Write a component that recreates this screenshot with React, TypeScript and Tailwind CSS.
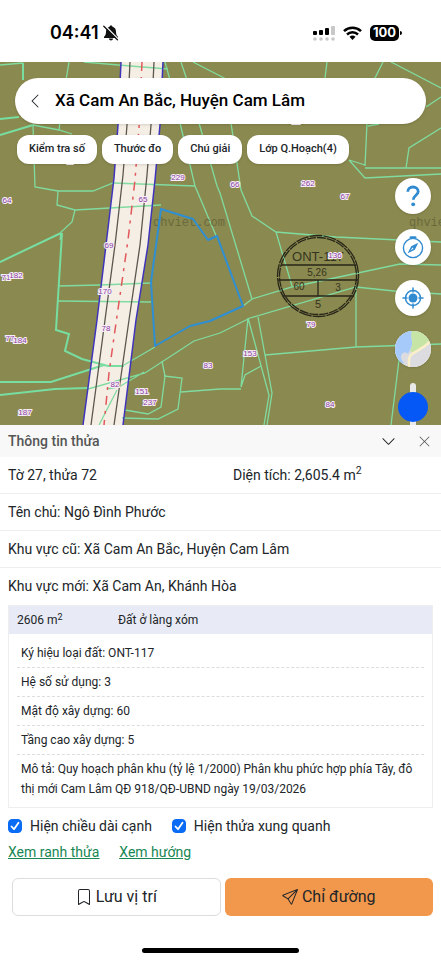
import type { ReactNode } from "react";
import { BsBookmark, BsChevronDown, BsChevronLeft, BsSend, BsXLg } from "react-icons/bs";

const filters = ["Kiểm tra số", "Thước đo", "Chú giải", "Lớp Q.Hoạch(4)"];

const details = [
  "Ký hiệu loại đất: ONT-117",
  "Hệ số sử dụng: 3",
  "Mật độ xây dựng: 60",
  "Tầng cao xây dựng: 5",
  "Mô tả: Quy hoạch phân khu (tỷ lệ 1/2000) Phân khu phức hợp phía Tây, đô thị mới Cam Lâm QĐ 918/QĐ-UBND ngày 19/03/2026",
];

// plot number labels: text, x, y
const plots: [string, number, number][] = [
  ["229", 178, 180],
  ["64", 7, 203],
  ["65", 143, 202],
  ["66", 235, 187],
  ["262", 308, 186],
  ["67", 345, 199],
  ["69", 109, 248],
  ["71", 6, 280],
  ["182", 16, 278],
  ["170", 105, 294],
  ["78", 106, 331],
  ["77", 10, 341],
  ["184", 20, 343],
  ["83", 208, 368],
  ["82", 115, 387],
  ["151", 142, 394],
  ["237", 150, 405],
  ["187", 25, 415],
  ["153", 250, 356],
  ["79", 311, 327],
  ["84", 330, 407],
  ["136", 335, 258],
];

function StatusBar() {
  return (
    <header className="flex h-[62px] items-center justify-between pl-[50px] pr-[39px] pt-1">
      <div className="flex items-center gap-1">
        <span className="font-['Inter'] text-[18px] font-semibold leading-6 text-black">04:41</span>
        <svg viewBox="0 0 16 16" className="size-4" aria-hidden="true">
          <path
            d="M8 .5c.8 0 1.400.5 1.500 1.200 2.300.7 3.500 2.500 3.500 5 0 2.900.8 3.900 2 5v1.300H1v-1.300c1.200-1.100 2-2.100 2-5 0-2.500 1.200-4.300 3.500-5C6.600 1 7.200.5 8 .5zM5.800 13.600h4.400c-.3 1.200-1.100 1.900-2.200 1.900s-1.900-.7-2.200-1.900z"
            fill="#111"
          />
          <path d="M2 .8l13 13.200" stroke="#fff" strokeWidth="1.600" />
          <path d="M.8 1.200l13.600 13.600" stroke="#111" strokeWidth="1.300" strokeLinecap="round" />
        </svg>
      </div>
      <div className="flex items-center gap-2">
        <svg viewBox="0 0 22 15" className="h-[15px] w-[22px]" aria-hidden="true">
          <rect x="0" y="5" width="4" height="4" rx="1" />
          <rect x="6" y="4" width="4" height="5" rx="1" />
          <rect x="12" y="2" width="4" height="7" rx="1" />
          <rect x="18" y="0" width="4" height="9" rx="1" fill="#c8c8c8" />
          {[2, 8, 14, 20].map((x) => (
            <circle key={x} cx={x} cy="13" r="1.800" fill="#c8c8c8" />
          ))}
        </svg>
        <svg viewBox="0 0 19 14" className="h-[14px] w-[19px]" aria-hidden="true">
          <g fill="none" stroke="#000" strokeWidth="2.500">
            <path d="M1 5.200a12.300 12.300 0 0 1 17 0" />
            <path d="M4 8.500a8 8 0 0 1 11 0" />
          </g>
          <path d="M6.500 10.800a4.400 4.400 0 0 1 6 0L9.500 14z" />
        </svg>
        <div className="flex items-center gap-px">
          <span className="flex h-4 w-[29px] items-center justify-center rounded-[5px] bg-black font-['Inter'] text-[13px] font-bold text-white">
            100
          </span>
          <span className="h-1 w-[2px] rounded-r bg-black" />
        </div>
      </div>
    </header>
  );
}

function ParcelMap() {
  return (
    <svg
      viewBox="0 62 441 363"
      preserveAspectRatio="xMidYMin slice"
      className="absolute inset-0 size-full"
      role="img"
      aria-label="Xã Cam An Bắc"
    >
      <rect y="62" width="441" height="363" fill="#8a894f" />
      <path
        d="M121 62L118 125L114 178L106 245L97 320L83 425H123L136 320L148 245L155 180L160 125L163 62Z"
        fill="#f4eee5"
      />
      <g fill="none" stroke="#80dba0" strokeWidth="1.300">
        <path d="M0 65L23 63M69 62L66 80M84 62L130 66L168 69M165 62L170 80M181 62L187 80M193 62L228 80M327 62L325 78M383 62L374 80M391 62L441 88M441 97L426 107" />
        <path d="M33 125L59 130L72 134M59 130L61 115M33 125L35 187L58 191L93 191L113 183L195 186M58 191L57 205L75 210L110 208L161 205M75 210L72 222L61 232L60 240" />
        <path d="M180 123L195 186L217 238M199 123L217 186L220 193L252 299M231 123L241 190L252 216L276 232L336 237L441 242M276 232L292 286" />
        <path d="M367 123L365 166M365 168H441M349 160L365 165M349 160L365 178L441 174M406 168L409 148L441 128M368 126L379 124" />
        <path d="M58 286L100 285L151 283M57 301L151 302M124 365L155 347M88 389L145 373L194 341L220 333M107 389L119 387L144 372" />
        <path d="M162 361L165 376L161 407L148 414L125 410M164 376L182 378L178 409L158 419L122 418M181 392L220 389M117 390L99 425" />
        <path d="M243 306L252 299L292 287L400 264L441 265M220 333L250 318L356 287L394 291L441 294M356 287L356 347M265 355L356 347L441 344M248 318L241 387L245 375L261 366M248 318L269 395L264 425M258 317L272 393L267 425M220 389H241M399 360L391 425" />
      </g>
      <path
        d="M0 119L19 117M0 135L33 125M23 63V80M0 262L61 233M62 233L56 330L69 334L65 351L82 359L108 366H124M0 382H51L104 365M0 395L55 389L88 388"
        fill="none"
        stroke="#78dda1"
        strokeWidth="2"
      />
      <g fill="none">
        <path
          d="M121 62L118 125L114 178L106 245L97 320L83 425M163 62L160 125L155 180L148 245L136 320L123 425"
          stroke="#3f35bc"
          strokeWidth="1.500"
        />
        <path
          d="M130 62L127 125L123 175L115 245L105 320L91 425M154 62L151 125L147 175L140 245L129 320L114 425"
          stroke="#5b574e"
          strokeWidth="1.300"
        />
        <path
          d="M142 62L139 128L135 180L128 240L115 330L109 373L104 425"
          stroke="#e2585b"
          strokeWidth="1.500"
          strokeDasharray="9 6 3 6"
        />
      </g>
      <g fontFamily="Liberation Mono, monospace" fontSize="12" fill="#6b6a3d">
        <text x="153" y="226">qhviet.com</text>
        <text x="409" y="226">qhviet.com</text>
      </g>
      <path
        d="M161 209L193 219L208 240L217 236L243 306L210 321L190 326L155 346L151 282Z"
        fill="none"
        stroke="#2f8fd3"
        strokeWidth="2"
        strokeLinejoin="round"
      />
      <g fill="none" stroke="#28271a" strokeWidth="1.300">
        <circle cx="318" cy="276" r="40.500" strokeDasharray="13 1" />
        <circle cx="318" cy="276" r="38.500" strokeDasharray="9 1" />
        <path d="M281 265H356M278 280H358M283 296H354M318 280V296" />
      </g>
      <g fontFamily="Liberation Sans, sans-serif" fill="#353420" textAnchor="middle">
        <text x="318" y="261" fontSize="13">ONT-117</text>
        <text x="317" y="276" fontSize="10">5,26</text>
        <text x="299" y="290" fontSize="10">60</text>
        <text x="338" y="291" fontSize="10">3</text>
        <text x="318" y="308" fontSize="11">5</text>
      </g>
      <g
        fontFamily="Liberation Sans, sans-serif"
        fontSize="8"
        fill="#8a3da0"
        stroke="#f7eef7"
        strokeWidth="2"
        paintOrder="stroke"
        textAnchor="middle"
      >
        {plots.map(([name, x, y]) => (
          <text key={name} x={x} y={y}>
            {name}
          </text>
        ))}
      </g>
      <g fill="#f7eef7">
        <rect x="291" y="120" width="10" height="5" rx="1" />
        <rect x="66" y="160" width="8" height="5" rx="1" />
      </g>
    </svg>
  );
}

function MapButton({ label, children }: { label: string; children: ReactNode }) {
  return (
    <button
      aria-label={label}
      className="flex size-9 items-center justify-center overflow-hidden rounded-full bg-white text-[#318bd0] shadow-sm"
    >
      {children}
    </button>
  );
}

function MapControls() {
  return (
    <div className="absolute right-[10px] top-[116px] flex flex-col items-center gap-[15px]">
      <MapButton label="Trợ giúp">
        <svg viewBox="0 0 24 24" className="size-6" fill="none" stroke="currentColor" strokeWidth="2.800">
          <path d="M6.800 7.800c0-3 2.200-4.800 5.200-4.800s5.200 1.700 5.200 4.600c0 3.600-4.900 3.800-4.900 8.200" />
          <circle cx="12.200" cy="20.300" r="1.900" fill="currentColor" stroke="none" />
        </svg>
      </MapButton>
      <MapButton label="La bàn">
        <svg viewBox="0 0 24 24" className="size-6" fill="none" stroke="currentColor" strokeWidth="1.400">
          <circle cx="12" cy="13" r="9.600" />
          <path d="M9.800 2.400h4.400" strokeWidth="2.400" strokeLinecap="round" />
          <path d="M17.300 7.700l-3.500 7.100-7.100 3.500 3.500-7.100z" fill="currentColor" stroke="none" />
          <path d="M11.500 12.500l1 1-3 2z" fill="#fff" stroke="none" />
        </svg>
      </MapButton>
      <MapButton label="Vị trí của tôi">
        <svg viewBox="0 0 24 24" className="size-6" fill="none" stroke="currentColor" strokeWidth="1.500">
          <circle cx="12" cy="12" r="7.500" />
          <circle cx="12" cy="12" r="4.500" fill="currentColor" stroke="none" />
          <path d="M12 2v4M12 18v4M2 12h4M18 12h4" strokeLinecap="round" />
        </svg>
      </MapButton>
      <MapButton label="Lớp bản đồ">
        <svg viewBox="0 0 36 36" className="size-9">
          <rect width="36" height="36" fill="#dcdce0" />
          <path d="M0 0h17c-2 6 1 10 0 14-1 4-3 6-4 9-3-3-7-1-7 3 0 3 2 4 3 6L0 36z" fill="#a6cbfa" />
          <path d="M17 0h19v11L20 22c-2-1-4-1-5-2 1-2 2-4 2-7 1-5-2-7 0-13z" fill="#c7e4a7" />
          <path d="M14 36c0-6-1-10 3-13 6-4 12-6 19-13" fill="none" stroke="#fbefca" strokeWidth="2.500" />
        </svg>
      </MapButton>
    </div>
  );
}

function InfoRow({ children }: { children: ReactNode }) {
  return <div className="flex h-[37px] items-center border-b border-[#eeeeee] px-2">{children}</div>;
}

function Check({ children }: { children: ReactNode }) {
  return (
    <label className="flex items-center gap-2">
      <span className="relative size-[14px]">
        <input
          type="checkbox"
          defaultChecked
          className="peer block size-[14px] appearance-none rounded-[4px] border border-[#bbbbbb] checked:border-[#0a6cf5] checked:bg-[#0a6cf5]"
        />
        <svg
          viewBox="0 0 14 14"
          className="pointer-events-none absolute inset-0 hidden peer-checked:block"
          fill="none"
          stroke="#fff"
          strokeWidth="1.800"
          strokeLinecap="round"
          strokeLinejoin="round"
          aria-hidden="true"
        >
          <path d="M3.500 7.500L6 10.200L10.500 3.800" />
        </svg>
      </span>
      {children}
    </label>
  );
}

export default function App() {
  return (
    <div className="min-h-screen bg-white font-['Roboto',sans-serif] text-[#212529]">
      <StatusBar />

      <section className="relative h-[363px] overflow-hidden">
        <ParcelMap />
        <div className="relative px-[15px] pt-4">
          <div className="flex h-[46px] items-center gap-3 rounded-full bg-white px-3 shadow-sm">
            <button aria-label="Quay lại">
              <BsChevronLeft className="size-4" />
            </button>
            <h1 className="text-[17px] font-medium text-black">Xã Cam An Bắc, Huyện Cam Lâm</h1>
          </div>
          <div className="flex gap-[5px] px-[2px] pt-[11px]">
            {filters.map((name) => (
              <button key={name} className="h-[29px] rounded-xl bg-white px-3 text-[11px] font-medium shadow-sm">
                {name}
              </button>
            ))}
          </div>
        </div>
        <MapControls />
        <div className="absolute right-[13px] top-[321px] flex w-[30px] justify-center">
          <span className="h-12 w-[6px] rounded-full bg-[#e9e9e9]" />
          <span className="absolute top-[9px] size-[30px] rounded-full bg-[#0558f5]" />
        </div>
      </section>

      <main>
        <div className="flex h-8 items-center justify-between bg-[#f8f8f8] pl-2 pr-[10px] text-[#555555]">
          <h2 className="text-[14px] font-medium">Thông tin thửa</h2>
          <div className="flex items-center gap-[22px]">
            <button aria-label="Thu gọn">
              <BsChevronDown className="size-[15px] text-[#222222]" />
            </button>
            <button aria-label="Đóng">
              <BsXLg className="size-[13px]" />
            </button>
          </div>
        </div>
        <div className="text-[14px]">
          <InfoRow>
            <span className="flex-1">Tờ 27, thửa 72</span>
            <span className="w-[200px]">
              Diện tích: 2,605.4 m<sup>2</sup>
            </span>
          </InfoRow>
          <InfoRow>Tên chủ: Ngô Đình Phước</InfoRow>
          <InfoRow>Khu vực cũ: Xã Cam An Bắc, Huyện Cam Lâm</InfoRow>
          <div className="flex h-[37px] items-center px-2">Khu vực mới: Xã Cam An, Khánh Hòa</div>
        </div>

        <section className="mx-2 border border-[#eeeeee] text-[12px]">
          <div className="flex h-7 items-center bg-[#e8ebf5] px-2">
            <span className="w-[101px]">
              2606 m<sup>2</sup>
            </span>
            <span>Đất ở làng xóm</span>
          </div>
          <ul className="px-2 pt-[5px]">
            {details.map((line) => (
              <li
                key={line}
                className="border-b border-dashed border-[#dddddd] px-1 py-1 leading-5 last:border-b-0 last:pb-2"
              >
                {line}
              </li>
            ))}
          </ul>
        </section>

        <div className="flex gap-5 px-2 pt-[7px] text-[14px] leading-[22px]">
          <Check>Hiện chiều dài cạnh</Check>
          <Check>Hiện thửa xung quanh</Check>
        </div>
        <div className="flex gap-5 px-2 pt-1 text-[14px] leading-[22px] text-[#198754] underline">
          <a href="#ranh-thua">Xem ranh thửa</a>
          <a href="#huong">Xem hướng</a>
        </div>
        <div className="grid grid-cols-2 gap-1 pb-8 pl-3 pr-2 pt-[15px] text-[16px]">
          <button className="flex h-[38px] items-center justify-center gap-1 rounded-md border border-[#dddddd]">
            <BsBookmark className="size-4" />
            Lưu vị trí
          </button>
          <button className="flex h-[38px] items-center justify-center gap-1 rounded-md bg-[#f2984c]">
            <BsSend className="size-4" />
            Chỉ đường
          </button>
        </div>
        <div className="mx-auto h-[5px] w-[157px] rounded-full bg-black" />
      </main>
    </div>
  );
}
